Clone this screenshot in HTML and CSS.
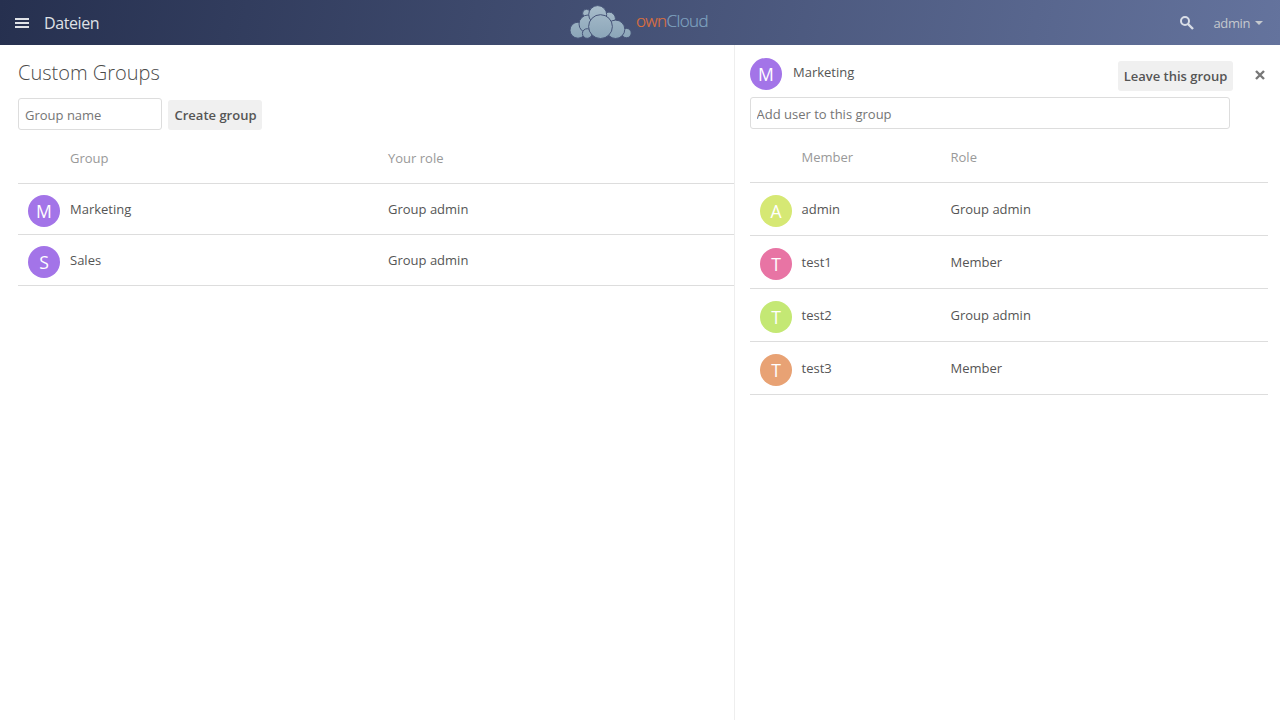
FILE: index.html
```html
<!DOCTYPE html>
<html lang="de">
<head>
<meta charset="utf-8">
<title>Custom Groups</title>
<link rel="stylesheet" href="styles.css">
</head>
<body>
<header class="header">
  <div class="nav">
    <svg class="menu-icon" width="14" height="10" viewBox="0 0 14 10"><path d="M0 0h14v2H0zM0 4h14v2H0zM0 8h14v2H0z" fill="#e0e3e8"/></svg>
    <span class="app-name">Dateien</span>
  </div>
  <div class="logo">
    <svg width="62" height="36" viewBox="570 4 62 36">
      <defs><linearGradient id="cloud" gradientUnits="userSpaceOnUse" x1="0" y1="5" x2="0" y2="39"><stop offset="0" stop-color="#a9bdcb"/><stop offset="1" stop-color="#8aa5b8"/></linearGradient></defs>
      <g fill="url(#cloud)" stroke="#465478" stroke-width="1">
        <circle cx="586.5" cy="13.2" r="3.9"/>
        <circle cx="609" cy="18.5" r="6.4"/>
        <circle cx="578" cy="30.2" r="8"/>
        <circle cx="626.5" cy="33.1" r="4.7"/>
        <circle cx="615.6" cy="29.3" r="9.2"/>
        <circle cx="588" cy="24" r="9"/>
        <circle cx="597.7" cy="14.6" r="9"/>
        <circle cx="587.2" cy="33.5" r="4.8"/>
        <circle cx="600.5" cy="26.6" r="11.9"/>
      </g>
    </svg>
    <span class="brand"><span class="brand-own">own</span>Cloud</span>
  </div>
  <div class="tools">
    <svg class="search-icon" width="14" height="14" viewBox="0 0 14 14" fill="none" stroke="#d9dee7"><circle cx="5" cy="5" r="4" stroke-width="2"/><path d="M8 8l5 5" stroke-width="2.4"/></svg>
    <span class="user">admin</span>
    <svg class="caret" width="8" height="4" viewBox="0 0 8 4"><path d="M0 0h8L4 4z" fill="#c5c9ce"/></svg>
  </div>
</header>
<main class="content">
  <section class="groups">
    <h1 class="title">Custom Groups</h1>
    <form class="create">
      <input class="field group-field" type="text" placeholder="Group name">
      <button class="button create-button" type="button">Create group</button>
    </form>
    <div class="row group-row head"><span class="name">Group</span><span>Your role</span></div>
    <div class="row group-row"><span class="avatar purple">M</span><span class="name">Marketing</span><span>Group admin</span></div>
    <div class="row group-row"><span class="avatar purple">S</span><span class="name">Sales</span><span>Group admin</span></div>
  </section>
  <aside class="sidebar">
    <div class="group-bar">
      <span class="avatar purple">M</span>
      <span class="group-name">Marketing</span>
      <button class="button leave" type="button">Leave this group</button>
      <svg class="close" width="10" height="10" viewBox="0 0 10 10"><path d="M1 1l8 8M9 1L1 9" stroke="#777" stroke-width="2.4"/></svg>
    </div>
    <input class="field user-field" type="text" placeholder="Add user to this group">
    <div class="row member-row head"><span class="name">Member</span><span>Role</span></div>
    <div class="row member-row"><span class="avatar lime">A</span><span class="name">admin</span><span>Group admin</span></div>
    <div class="row member-row"><span class="avatar pink">T</span><span class="name">test1</span><span>Member</span></div>
    <div class="row member-row"><span class="avatar green">T</span><span class="name">test2</span><span>Group admin</span></div>
    <div class="row member-row"><span class="avatar orange">T</span><span class="name">test3</span><span>Member</span></div>
  </aside>
</main>
</body>
</html>
```
FILE: styles.css
```css
* { box-sizing: border-box; }
body {
  margin: 0;
  height: 720px;
  overflow: hidden;
  display: flex;
  flex-direction: column;
  background: #fff;
  color: #555;
  font: 13px/20px "Open Sans", sans-serif;
}
.header {
  flex: 0 0 45px;
  display: grid;
  grid-template-columns: 570px 1fr auto;
  background: linear-gradient(100deg, #26304f, #64739d);
}
.nav { display: flex; align-items: center; padding-left: 15px; gap: 15px; }
.app-name { font-size: 16px; letter-spacing: -0.4px; color: #dfe1e6; }
.logo { display: flex; align-items: flex-start; gap: 4px; padding-top: 4px; }
.brand { font-size: 17px; font-weight: 300; line-height: 34px; letter-spacing: -0.6px; color: #7fa3c0; -webkit-text-stroke: 0.2px; }
.brand-own { color: #e0713a; }
.tools { display: flex; align-items: center; padding-right: 17px; }
.search-icon { margin-right: 20px; }
.user { color: #c5c9ce; letter-spacing: -0.4px; margin-right: 5px; }
.content { flex: 1; display: flex; }
.groups { flex: 0 0 734px; padding: 13px 0 0 18px; }
.title { margin: 0 0 10px; font-size: 20px; font-weight: 300; line-height: 30px; color: #4a4a4a; }
.create { display: flex; align-items: flex-start; gap: 6px; }
.field {
  display: block;
  height: 32px;
  border: 1px solid #ddd;
  border-radius: 3px;
  padding: 2px 6px 0;
  margin: 0;
  font: inherit;
  color: #555;
  background: #fff;
}
.field::placeholder { color: #757575; }
.group-field { width: 144px; }
.button {
  margin: 2px 0 0;
  height: 30px;
  width: 94px;
  padding: 0;
  border: 0;
  border-radius: 3px;
  background: #f0f0f0;
  color: #555;
  font: 600 13px/30px "Open Sans", sans-serif;
  white-space: nowrap;
}
.create-button { padding-left: 1px; }
.row { display: flex; align-items: flex-start; border-bottom: 1px solid #ddd; padding-left: 10px; }
.head { color: #999; }
.avatar {
  flex: none;
  width: 32px;
  height: 32px;
  border-radius: 50%;
  color: #fff;
  font-size: 17.6px;
  line-height: 33px;
  text-align: center;
}
.group-row { height: 51px; padding-top: 11px; }
.group-row .name { width: 318px; margin-left: 10px; }
.group-row > span:not(.avatar) { padding-top: 4px; }
.group-row.head { height: 54px; padding-top: 14px; }
.head .name { padding-left: 32px; }
.group-row.head .name { width: 350px; }
.sidebar { flex: 1; border-left: 1px solid #eee; padding: 13px 12px 0 15px; }
.group-bar { display: flex; align-items: flex-start; height: 39px; }
.group-name { padding-top: 4px; margin-left: 11px; }
.leave { width: 115px; margin: 3px 22px 0 auto; }
.close { margin: 12px 3px 0 0; }
.user-field { width: 480px; padding-left: 5.5px; }
.member-row { height: 53px; padding-top: 12px; }
.member-row .name { width: 149px; margin-left: 9.5px; }
.member-row > span:not(.avatar) { padding-top: 4px; }
.member-row.head { height: 54px; padding-top: 14px; }
.member-row.head .name { width: 181px; }
.purple { background: #a374e8; }
.lime { background: #d6e874; }
.pink { background: #e874a4; }
.green { background: #c4e874; }
.orange { background: #e8a274; }
```
